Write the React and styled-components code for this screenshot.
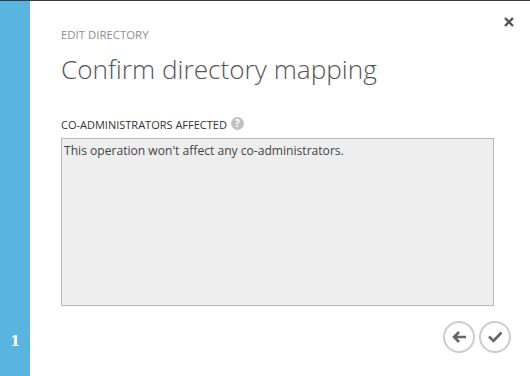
import React from "react";
import styled, { createGlobalStyle } from "styled-components";

const Global = createGlobalStyle`
  html, body { margin: 0; padding: 0; background: #fff; }
  body { font-family: "Open Sans", "Noto Sans", sans-serif; }
  * { box-sizing: border-box; }
`;

const Frame = styled.div`
  width: 530px;
  height: 376px;
  display: flex;
  position: relative;
  overflow: hidden;
  border-top: 1px solid #3a3a3a;
  background: #fff;
`;

const Sidebar = styled.div`
  width: 30px;
  flex: none;
  background: #59b4e0;
  display: flex;
  flex-direction: column;
  justify-content: flex-end;
  align-items: center;
  padding-bottom: 28px;
`;

const StepNum = styled.span`
  color: #fff;
  font-family: "DejaVu Serif", "Liberation Serif", serif;
  font-weight: bold;
  font-size: 14px;
  line-height: 14px;
`;

const Main = styled.div`
  flex: 1;
  display: flex;
  flex-direction: column;
  padding: 27px 36px 0 31px;
`;

const Kicker = styled.div`
  font-size: 11.4px;
  line-height: 14px;
  color: #8f8f8f;
  text-transform: uppercase;
`;

const Title = styled.h1`
  margin: 11px 0 0 0;
  font-weight: 300;
  font-size: 26.2px;
  line-height: 32px;
  color: #555;
  letter-spacing: 0;
`;

const FieldLabel = styled.div`
  margin-top: 33px;
  display: flex;
  align-items: center;
  gap: 4px;
  font-size: 11px;
  line-height: 14px;
  color: #333;
`;

const Help = styled.span`
  width: 13px;
  height: 13px;
  border-radius: 50%;
  background: #c2c2c2;
  color: #fff;
  font-size: 10px;
  font-weight: bold;
  line-height: 13px;
  text-align: center;
  margin-top: -3px;
`;

const Box = styled.div`
  margin-top: 6px;
  height: 168px;
  background: #eeeeee;
  border: 1px solid #b9b9b9;
  padding: 4px 2px;
  font-size: 12.1px;
  line-height: 16px;
  color: #444;
`;

const Actions = styled.div`
  display: flex;
  justify-content: flex-end;
  gap: 4px;
  margin-top: 15px;
  margin-right: -17px;
`;

const RoundBtn = styled.button`
  width: 32px;
  height: 32px;
  border-radius: 50%;
  border: 2px solid #cccccc;
  background: #fff;
  padding: 0;
  display: flex;
  align-items: center;
  justify-content: center;
  cursor: pointer;
`;

const Close = styled.button`
  position: absolute;
  top: 15px;
  right: 15px;
  width: 12px;
  height: 12px;
  padding: 0;
  border: 0;
  background: transparent;
  display: flex;
  align-items: center;
  justify-content: center;
`;

export default function App() {
  return (
    <>
      <Global />
      <Frame>
        <Sidebar>
          <StepNum>1</StepNum>
        </Sidebar>
        <Main>
          <Kicker>Edit directory</Kicker>
          <Title>Confirm directory mapping</Title>
          <FieldLabel>
            CO-ADMINISTRATORS AFFECTED <Help>?</Help>
          </FieldLabel>
          <Box>This operation won't affect any co-administrators.</Box>
          <Actions>
            <RoundBtn aria-label="Back">
              <svg width="16" height="14" viewBox="0 0 16 14">
                <path d="M15 7H3M8 2L3 7l5 5" fill="none" stroke="#666" strokeWidth="2.6" />
              </svg>
            </RoundBtn>
            <RoundBtn aria-label="Confirm">
              <svg width="16" height="14" viewBox="0 0 16 14">
                <path d="M2 6.5l4.5 4.5L14.5 2.5" fill="none" stroke="#666" strokeWidth="2.6" />
              </svg>
            </RoundBtn>
          </Actions>
        </Main>
        <Close aria-label="Close">
          <svg width="10" height="10" viewBox="0 0 10 10">
            <path d="M1 1l8 8M9 1l-8 8" stroke="#555" strokeWidth="2.4" />
          </svg>
        </Close>
      </Frame>
    </>
  );
}
